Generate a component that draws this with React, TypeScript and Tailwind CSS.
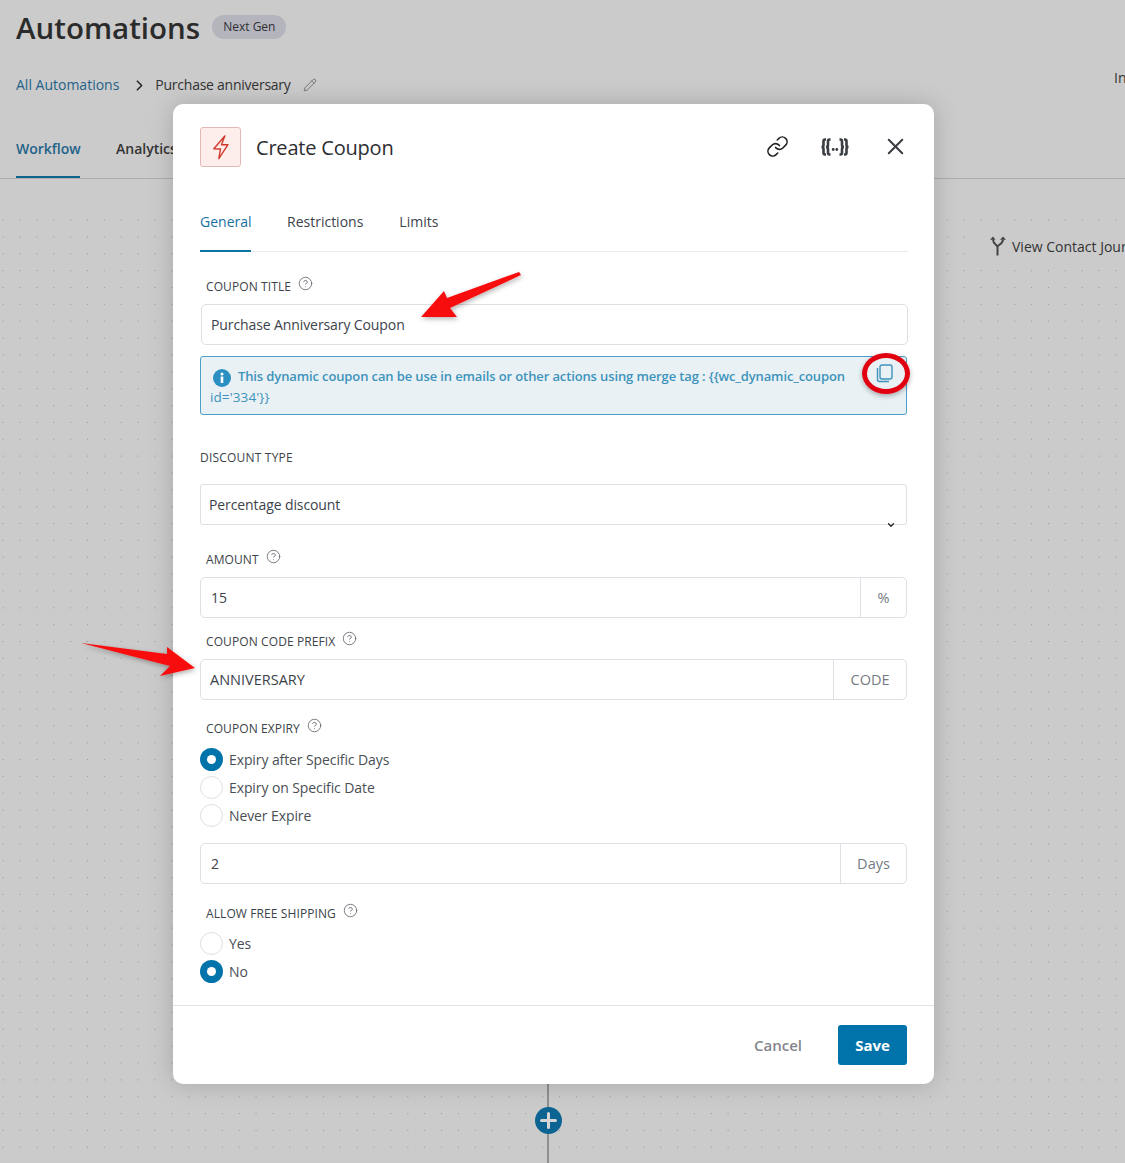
import { ChevronDown, ChevronRight, CircleHelp, Link, Pencil, X } from "lucide-react";

const font = "font-['Open_Sans','Noto_Sans',sans-serif]";

function Label({ text, className = "" }: { text: string; className?: string }) {
  return (
    <div className={`flex items-center gap-[7px] pl-[6px] text-[12px] leading-[16px] tracking-[0.1px] text-[#3c434a] ${className}`}>
      <span>{text}</span>
      <CircleHelp size={15} strokeWidth={1.3} className="relative -top-[4px] text-[#5f6368]" />
    </div>
  );
}

function Field({ value, unit, unitWidth, inset = "pl-[10px]", size = "text-[14px] tracking-[-0.1px]" }: { value: string; unit?: string; unitWidth?: string; inset?: string; size?: string }) {
  return (
    <div className="flex h-[41px] rounded-[5px] border border-[#dcdfe3] text-[#3c434a]">
      <div className={`flex flex-1 items-center ${inset} ${size}`}>{value}</div>
      {unit && <div className={`flex items-center justify-center border-l border-[#dcdfe3] text-[14.500px] text-[#757b82] ${unitWidth}`}>{unit}</div>}
    </div>
  );
}

function Radio({ label, checked }: { label: string; checked?: boolean }) {
  return (
    <div className="flex h-[28px] items-center gap-[6px] text-[14px] tracking-[-0.1px] text-[#4a4f55]">
      {checked ? (
        <span className="flex h-[23px] w-[23px] items-center justify-center rounded-full bg-[#0073aa]">
          <span className="h-[9px] w-[9px] rounded-full bg-white" />
        </span>
      ) : (
        <span className="h-[23px] w-[23px] rounded-full border border-[#dcdfe3]" />
      )}
      {label}
    </div>
  );
}

function MergeTagIcon() {
  return (
    <svg width="30" height="20" viewBox="0 0 30 20" fill="none" stroke="#3a3d41" strokeWidth="2.600">
      <path d="M6 2.500H5C3.800 2.500 3.500 3.200 3.500 4.500v3.500c0 1.200-.6 2-2 2 1.400 0 2 .8 2 2v3.500c0 1.300.3 2 1.500 2h1" />
      <path d="M10.500 2.500h-1C8.300 2.500 8 3.200 8 4.500v3.500c0 1.200-.6 2-2 2 1.400 0 2 .8 2 2v3.500c0 1.300.3 2 1.500 2h1" />
      <path d="M19.500 2.500h1c1.200 0 1.500.7 1.500 2v3.500c0 1.200.6 2 2 2-1.400 0-2 .8-2 2v3.500c0 1.300-.3 2-1.500 2h-1" />
      <path d="M24 2.500h1c1.200 0 1.500.7 1.500 2v3.500c0 1.200.6 2 2 2-1.400 0-2 .8-2 2v3.500c0 1.300-.3 2-1.500 2h-1" />
      <circle cx="13.200" cy="12.500" r="1.400" fill="#3a3d41" stroke="none" />
      <circle cx="16.800" cy="12.500" r="1.400" fill="#3a3d41" stroke="none" />
    </svg>
  );
}

function InfoIcon() {
  return (
    <svg width="18" height="18" viewBox="0 0 18 18" className="absolute left-[12px] top-[12px]">
      <circle cx="9" cy="9" r="9" fill="#2b8fc2" />
      <circle cx="9" cy="5" r="1.500" fill="#fff" />
      <rect x="7.700" y="7.500" width="2.600" height="6.500" fill="#fff" />
    </svg>
  );
}

function BoltIcon() {
  return (
    <svg width="18" height="26" viewBox="0 0 18 26" fill="none" stroke="#d0392b" strokeWidth="1.400" strokeLinejoin="round">
      <path d="M12.800 2 1.800 14.700 8.500 15 6.800 24.700 16 10.700H9.500z" />
    </svg>
  );
}

function CopyIcon() {
  return (
    <svg width="17" height="19" viewBox="0 0 17 19" fill="none" stroke="#3d93bb" strokeWidth="1.400" className="absolute right-[13px] top-[7px]">
      <rect x="4" y="1" width="12" height="14" rx="2" />
      <path d="M1.500 4v11.500c0 1.200.8 2 2 2H13" />
    </svg>
  );
}

function JourneyIcon() {
  return (
    <svg width="18" height="20" viewBox="0 0 18 20" fill="none" stroke="#444" strokeWidth="2">
      <path d="M8.500 19.500V11C8.500 9 4 8 4 3.500M8.500 11C8.500 9 14 8 14 3.500" />
      <path d="M1 3.800 4 .5l2.500 3.300zM11 3.800 14 .5l3 3.300z" fill="#444" stroke="none" />
    </svg>
  );
}

export default function App() {
  return (
    <div className={`relative flex h-[1163px] w-[1125px] flex-col overflow-hidden bg-[#cbcbcb] ${font}`}>
      {/* page behind the dialog */}
      <div className="relative shrink-0 pl-[16px]">
        <div className="flex items-center gap-[12px] pt-[8px]">
          <h1 className="text-[29.500px] font-semibold leading-[40px] text-[#2b2b2b]">Automations</h1>
          <span className="relative -top-[1px] rounded-full bg-[#b4b4bd] px-[11px] py-[3px] text-[12px] font-medium leading-[18px] text-[#2f2f33]">Next Gen</span>
        </div>
        <div className="mt-[27px] flex items-center text-[14px] leading-[20px]">
          <span className="text-[#1f6288]">All Automations</span>
          <ChevronRight size={17} strokeWidth={2.4} className="ml-[12px] mr-[7px] text-[#2b2b2b]" />
          <span className="tracking-[-0.25px] text-[#333]">Purchase anniversary</span>
          <Pencil size={14} strokeWidth={1.2} className="ml-[12px] text-[#555]" />
        </div>
        <span className="absolute right-[-6px] top-[67px] w-[17px] overflow-hidden text-[14px] text-[#333]">Inbox</span>
        <div className="mt-[38px] flex h-[45px] gap-[36px] text-[14px] font-semibold">
          <div className="h-[45px] w-[64px] border-b-2 border-[#0e6391] pt-[5px] text-[#1f6288]">Workflow</div>
          <div className="pt-[5px] text-[#333]">Analytics</div>
        </div>
      </div>
      <div className="h-px shrink-0 bg-[#adadad]" />
      <div className="relative flex flex-1 flex-col pt-[33px]">
        <div className="flex-1 bg-[radial-gradient(circle,#9b9b9b_0.8px,transparent_1px)] bg-[size:16.87px_16.87px] bg-[position:11.6px_-0.4px]" />
        <div className="absolute left-[970px] top-[50px] flex h-[34px] items-center gap-[5px] whitespace-nowrap bg-[#cbcbcb] pl-[19px] text-[14px] text-[#333]">
          <JourneyIcon />
          View Contact Journey
        </div>
        <div className="absolute bottom-0 left-[547px] top-[905px] w-[2px] bg-[#8f8f8f]" />
        <div className="absolute left-[535px] top-[928px] flex h-[27px] w-[27px] items-center justify-center rounded-full bg-[#0c6492]">
          <svg width="17" height="17" viewBox="0 0 17 17"><path d="M8.500 1.500v14M1.500 8.500h14" stroke="#d6d6d6" strokeWidth="3" strokeLinecap="round" /></svg>
        </div>
      </div>

      {/* dialog */}
      <div className="absolute left-[173px] top-[104px] flex h-[980px] w-[761px] flex-col rounded-[10px] bg-white shadow-[0_0_24px_rgba(0,0,0,0.18)]">
        <div className="flex h-[86px] shrink-0 items-start pl-[27px] pr-[25px] pt-[23px]">
          <div className="flex h-[40px] w-[41px] items-center justify-center rounded-[3px] border border-[#e3b9b5] bg-[#fdeeec]">
            <BoltIcon />
          </div>
          <h2 className="ml-[15px] text-[20px] font-medium leading-[42px] tracking-[-0.2px] text-[#2c2e31]">Create Coupon</h2>
          <div className="ml-auto flex items-center pt-[6px]">
            <Link size={23} strokeWidth={1.7} className="text-[#222]" />
            <div className="ml-[31px]"><MergeTagIcon /></div>
            <X size={27} strokeWidth={1.8} className="ml-[32px] text-[#3a3d41]" />
          </div>
        </div>

        <div className="ml-[27px] mr-[26px] flex h-[62px] shrink-0 gap-[36px] border-b border-[#e8eaec] pt-[21px] text-[14px]">
          <div className="h-[41px] w-[51px] whitespace-nowrap border-b-2 border-[#0e73a5] font-medium text-[#15719f]">General</div>
          <div className="text-[#3c434a]">Restrictions</div>
          <div className="text-[#3c434a]">Limits</div>
        </div>

        <div className="flex-1 pl-[27px] pr-[27px]">
          <Label text="COUPON TITLE" className="mt-[27px]" />
          <div className="ml-px mt-[9px] w-[707px]"><Field value="Purchase Anniversary Coupon" inset="pl-[9px]" /></div>
          <div className="relative mt-[11px] h-[59px] rounded-[3px] border border-[#4b9fc8] bg-[#e9f1f5] pl-[9px] pr-[40px] pt-[9px] text-[13px] font-semibold leading-[21px] tracking-[-0.12px] text-[#3d93bb]">
            <InfoIcon />
            <span className="ml-[28px]">This dynamic coupon can be use in emails or other actions using merge tag : {"{{wc_dynamic_coupon"}</span>
            <span className="block text-[13.500px] font-medium tracking-[0.1px]">{"id='334'}}"}</span>
            <CopyIcon />
          </div>

          <div className="mt-[35px] text-[12px] leading-[16px] tracking-[0.2px] text-[#3c434a]">DISCOUNT TYPE</div>
          <div className="relative mt-[18px] flex h-[41px] items-center rounded-[3px] border border-[#dcdfe3] pl-[8px] text-[14px] tracking-[-0.1px] text-[#3c434a]">
            Percentage discount
            <ChevronDown size={10} strokeWidth={3} className="absolute bottom-[-6px] right-[10px] text-[#222]" />
          </div>

          <Label text="AMOUNT" className="mt-[27px]" />
          <div className="mt-[9px]"><Field value="15" unit="%" unitWidth="w-[46px]" /></div>
          <Label text="COUPON CODE PREFIX" className="mt-[16px]" />
          <div className="mt-[9px]"><Field value="ANNIVERSARY" unit="CODE" unitWidth="w-[73px]" inset="pl-[9px]" size="text-[14.500px]" /></div>
          <Label text="COUPON EXPIRY" className="mt-[21px]" />

          <div className="mt-[8px]">
            <Radio label="Expiry after Specific Days" checked />
            <Radio label="Expiry on Specific Date" />
            <Radio label="Never Expire" />
          </div>
          <div className="mt-[14px]"><Field value="2" unit="Days" unitWidth="w-[66px]" /></div>

          <Label text="ALLOW FREE SHIPPING" className="mt-[22px]" />
          <div className="mt-[7px]">
            <Radio label="Yes" />
            <Radio label="No" checked />
          </div>
        </div>

        <div className="flex h-[79px] shrink-0 items-center justify-end gap-[36px] border-t border-[#e3e4e6] pr-[27px]">
          <span className="text-[15px] font-semibold text-[#83868c]">Cancel</span>
          <span className="flex h-[40px] w-[69px] items-center justify-center rounded-[3px] bg-[#0073aa] text-[15px] font-bold text-white">Save</span>
        </div>
      </div>

      {/* annotations drawn on top of the screenshot */}
      <svg className="pointer-events-none absolute left-0 top-0 h-[1163px] w-[1125px]" viewBox="0 0 1125 1163">
        <defs>
          <filter id="arrowShadow" x="-20%" y="-20%" width="140%" height="150%">
            <feDropShadow dx="1" dy="2" stdDeviation="2.500" floodColor="#000" floodOpacity="0.3" />
          </filter>
        </defs>
        <polygon points="519,272 521,275 450,308 457,317 421,317 444,291 447,298" fill="#f70d0d" filter="url(#arrowShadow)" />
        <polygon points="81,643 167,654 167,647 195,668 160,676 170,666" fill="#f70d0d" filter="url(#arrowShadow)" />
      </svg>
      <div className="pointer-events-none absolute left-[862px] top-[353px] h-[41px] w-[48px] rounded-[50%] border-[5px] border-[#e0000f] shadow-[0_2px_5px_rgba(0,0,0,0.3)]" />
    </div>
  );
}
